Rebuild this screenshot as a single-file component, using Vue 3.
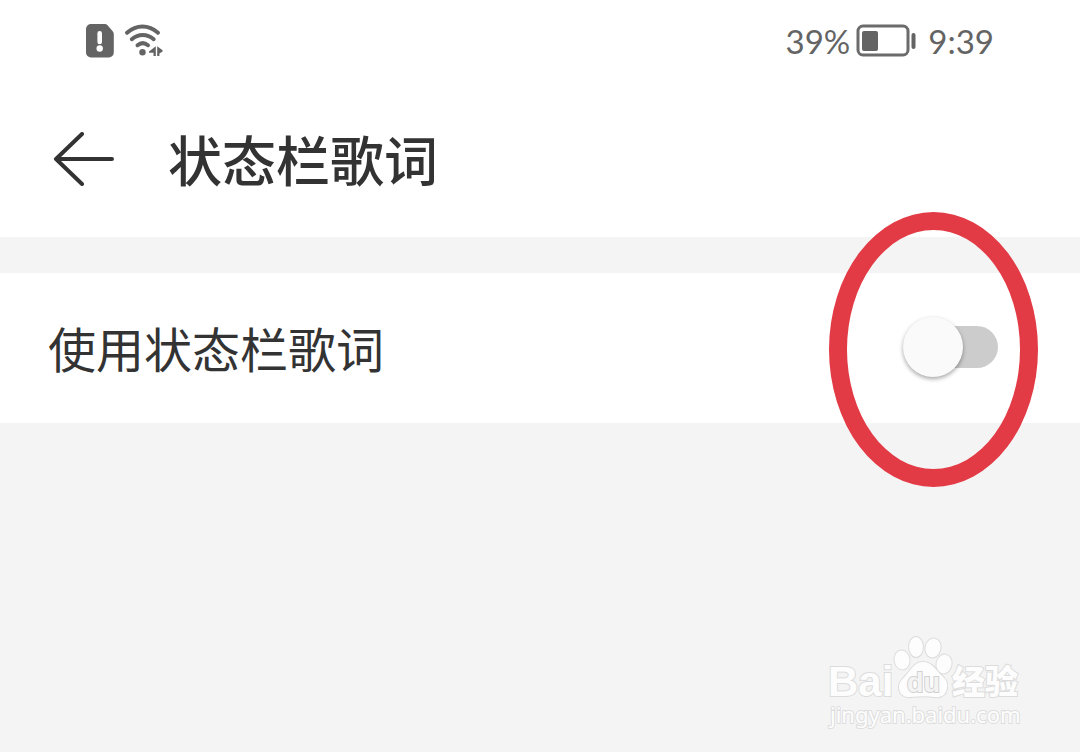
<script setup>
import { ref } from 'vue'

const enabled = ref(false)
</script>

<template>
  <div class="screen">
    <div class="status">
      <div class="signals">
        <svg class="sim" width="28" height="34" viewBox="0 0 28 34" aria-hidden="true">
          <path d="M5 0H18.500a4 4 0 0 1 3 1.200L26.500 7a5 5 0 0 1 1.300 3.500V28.500a5 5 0 0 1-5 5H5a5 5 0 0 1-5-5V5a5 5 0 0 1 5-5Z" fill="#646464" />
          <path d="M13.700 9.200v8.800" stroke="#fff" stroke-width="4.600" stroke-linecap="round" />
          <circle cx="13.700" cy="24.500" r="3.200" fill="#fff" />
        </svg>
        <svg width="40" height="34" viewBox="0 0 40 34" aria-hidden="true">
          <g fill="none" stroke="#646464" stroke-width="4" stroke-linecap="round">
            <path d="M3 8.800C12.500.5 24.500.5 34 8.800" />
            <path d="M7.800 15.200c6.500-5.600 15.400-5.600 21.900 0" />
            <path d="M13.500 21.200c3.300-2.600 7.200-2.600 10.500 0" />
          </g>
          <circle cx="18.500" cy="28.300" r="3.200" fill="#646464" />
          <path d="M31.800 22.200v9.800h-2.300v-3.200h-4.500v-1.200ZM33.200 22.200l5.400 4v1.200l-3.200 2v2.600h-2.200Z" fill="#646464" />
        </svg>
      </div>
      <div class="power">
        <span>39%</span>
        <svg class="battery" width="62" height="34" viewBox="0 0 62 34" aria-hidden="true">
          <rect x="2" y="2" width="50" height="29" rx="5" fill="none" stroke="#6b6b6b" stroke-width="3" />
          <rect x="6" y="7" width="16" height="20" rx="2" fill="#646464" />
          <path d="M57.500 11v12" stroke="#646464" stroke-width="4" stroke-linecap="round" />
        </svg>
        <span>9:39</span>
      </div>
    </div>

    <header class="header">
      <button class="back" type="button" aria-label="返回">
        <svg width="62" height="54" viewBox="0 0 62 54" aria-hidden="true">
          <path d="M59 27H3M29 2 3 27l26 25" fill="none" stroke="#333" stroke-width="4" stroke-linecap="round" stroke-linejoin="round" />
        </svg>
      </button>
      <h1>状态栏歌词</h1>
    </header>

    <main class="settings">
      <div class="row">
        <label for="lyrics">使用状态栏歌词</label>
        <div class="control">
          <input id="lyrics" v-model="enabled" type="checkbox" role="switch" />
          <span class="ring"></span>
        </div>
      </div>
    </main>

    <svg class="mark" width="204" height="100" viewBox="0 0 204 100" role="img" aria-label="Baidu 经验">
      <g class="outlined">
        <text class="latin" x="2" y="64">Bai</text>
        <g>
          <ellipse cx="76" cy="28" rx="7.500" ry="9.500" transform="rotate(-8 76 28)" />
          <ellipse cx="90" cy="15" rx="7" ry="10" />
          <ellipse cx="107" cy="16" rx="7.500" ry="9.500" transform="rotate(12 107 16)" />
          <ellipse cx="118" cy="32" rx="7.500" ry="9.500" transform="rotate(12 118 32)" />
          <path d="M97 30c9 0 13 8 18 13 5 4 7 8 6 13-1 7-6 10-12 9-8-1-16-1-24 0-7 1-12-3-12-10 0-6 5-9 9-14 4-5 7-11 15-11Z" />
        </g>
        <text class="du" x="81" y="60">du</text>
        <text class="cjk" x="126" y="62">经验</text>
        <text class="url" x="4" y="91">jingyan.baidu.com</text>
      </g>
    </svg>
  </div>
</template>

<style>
body {
  margin: 0;
  background: #f4f4f4;
}
</style>

<style scoped>
.screen {
  position: relative;
  min-height: 100vh;
  overflow: hidden;
  background: #f4f4f4;
  color: #333;
  font-family: "Noto Sans CJK SC", sans-serif;
}

.status {
  display: flex;
  align-items: center;
  justify-content: space-between;
  box-sizing: border-box;
  height: 82px;
  padding: 0 86px;
  background: #fff;
}

.signals,
.power {
  display: flex;
  align-items: center;
}

.signals {
  gap: 10px;
}

.power {
  gap: 6px;
  color: #646464;
  font: 33px/40px Lato, sans-serif;
}

.battery {
  margin-right: 4px;
}

.header {
  display: flex;
  align-items: center;
  gap: 53px;
  box-sizing: border-box;
  height: 155px;
  padding: 0 53px 2px;
  background: #fff;
}

.back {
  padding: 0;
  border: 0;
  background: none;
}

.back svg {
  display: block;
}

h1 {
  margin: 0;
  font-size: 54px;
  font-weight: 500;
  line-height: 80px;
}

.settings {
  padding-top: 36px;
}

.row {
  display: flex;
  align-items: center;
  justify-content: space-between;
  box-sizing: border-box;
  height: 150px;
  padding: 0 82px 2px 48px;
  background: #fff;
}

label {
  font-size: 48px;
  line-height: 72px;
}

.control {
  position: relative;
  display: flex;
}

input {
  position: relative;
  width: 95px;
  height: 60px;
  margin: 0;
  appearance: none;
}

input::before {
  content: "";
  position: absolute;
  inset: 9px 0 9px 9px;
  border-radius: 21px;
  background: #ccc;
}

input::after {
  content: "";
  position: absolute;
  top: 0;
  left: 0;
  width: 60px;
  height: 60px;
  border-radius: 50%;
  background: #fafafa;
  box-shadow: 0 2px 4px rgba(0, 0, 0, 0.35);
}

input:checked::after {
  left: 35px;
}

.ring {
  position: absolute;
  top: -105px;
  left: -74px;
  box-sizing: border-box;
  width: 209px;
  height: 275px;
  border: 18px solid #e33b46;
  border-radius: 50%;
  pointer-events: none;
}

.mark {
  position: absolute;
  right: 50px;
  bottom: 20px;
}

.outlined {
  fill: #fdfdfd;
  stroke: #dcdcdc;
  stroke-width: 2px;
  paint-order: stroke;
}

.latin {
  font: 700 42px "Liberation Sans", sans-serif;
}

.du {
  fill: #f4f4f4;
  stroke: #d2d2d2;
  font: 700 27px "Liberation Sans", sans-serif;
}

.cjk {
  font: 900 33px "Noto Sans CJK SC", sans-serif;
}

.url {
  stroke: #dedede;
  font: 22px "Noto Sans", sans-serif;
}
</style>
